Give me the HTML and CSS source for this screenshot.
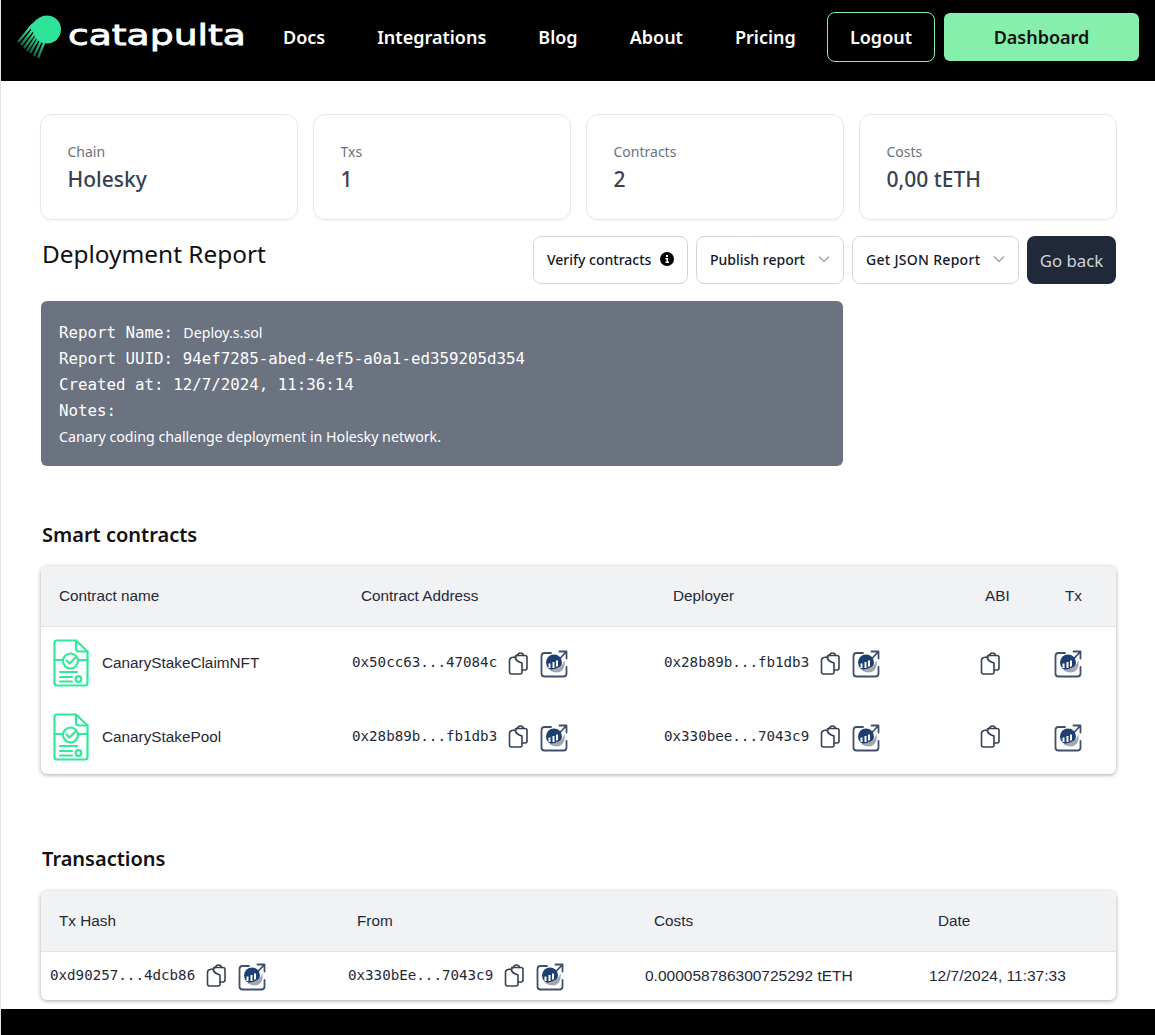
FILE: index.html
```html
<!DOCTYPE html>
<html lang="en">

<head>
  <meta charset="UTF-8" />
  <meta name="viewport" content="width=device-width, initial-scale=1.0" />
  <title>Deployment Report - Catapulta</title>
  <link rel="stylesheet" href="styles.css">
</head>

<body>

  <!-- shared icons -->
  <svg class="sprites" width="0" height="0" aria-hidden="true">
    <defs>
      <linearGradient id="tail" gradientUnits="userSpaceOnUse" x1="24" y1="18" x2="6" y2="42">
        <stop offset="0.150" stop-color="#2fe39a" />
        <stop offset="1" stop-color="#06281c" />
      </linearGradient>
    </defs>
    <symbol id="i-file" viewBox="0 0 36 48">
      <g fill="none" stroke="#2eea9a" stroke-width="2.200" stroke-linecap="round" stroke-linejoin="round">
        <path d="M23 1.500H4Q1.500 1.500 1.500 4V44Q1.500 46.500 4 46.500H32Q34.500 46.500 34.500 44V12.500Z" />
        <path d="M23 1.500V9.500Q23 12.500 26 12.500H34.500" />
        <circle cx="17.500" cy="22" r="7.500" />
        <path d="M13.500 21.500L16.500 24.500L22.500 18.500" />
        <path d="M1.500 21H10M25 21H34.500" />
        <path d="M7 33H24M7 38H19M7 42.500H19" />
        <circle cx="25.500" cy="40" r="2.800" />
      </g>
    </symbol>
    <symbol id="i-copy" viewBox="0 0 20 23">
      <g fill="none" stroke="#374151" stroke-width="1.600" stroke-linecap="round" stroke-linejoin="round">
        <path d="M1.500 8.500Q1.500 6 4 5.500L7 5Q8 9.500 14 11V20Q14 22 12 22H3.500Q1.500 22 1.500 20Z" />
        <path d="M8 5V3.500H9.500Q10 1 12.500 1Q15 1 15.500 3.500H17Q19 3.500 19 5.500V16Q19 18 17 18H14" />
        <path d="M8 3.500H15.500" />
      </g>
    </symbol>
    <symbol id="i-tx" viewBox="0 0 28 28">
      <path d="M11 3H4.500Q1.500 3 1.500 6V23.500Q1.500 26.500 4.500 26.500H23.500Q26.500 26.500 26.500 23.500V17" fill="none" stroke="#3f5068" stroke-width="1.800" stroke-linecap="round" />
      <path d="M20 8.500L26 2M19.500 1.500H26.500V8.500" fill="none" stroke="#3f5068" stroke-width="1.800" stroke-linecap="round" stroke-linejoin="round" />
      <circle cx="14" cy="12.500" r="8" fill="#1d3f72" />
      <path d="M8.500 18V13.500H10.500V18ZM12.500 18V12H14.500V18ZM16 17V10.500H18V16Z" fill="#fff" />
      <path d="M24.500 10Q22.500 18.500 9 20Q18 25 22.500 20Q25.500 16 24.500 10Z" fill="#a4a8ae" />
    </symbol>
  </svg>

  <header class="topbar">
    <a class="brand" href="#">
      <svg class="brand-mark" width="46" height="46" viewBox="0 0 46 46">
        <g stroke="url(#tail)" stroke-width="2.300" fill="none">
          <path d="M17 10L2 28" />
          <path d="M19 13L5 31" />
          <path d="M21 16L8 34" />
          <path d="M23 18L11 37" />
          <path d="M25 20L14 39" />
          <path d="M27 22L18 42" />
          <path d="M30 24L22 44" />
        </g>
        <path d="M21 5L13 13L28 29L41 26Z" fill="#2fe39a" />
        <circle cx="31" cy="15.500" r="14" fill="#2fe39a" />
      </svg>
      <span class="brand-name">catapulta</span>
    </a>
    <nav class="nav-links">
      <a href="#">Docs</a>
      <a href="#">Integrations</a>
      <a href="#">Blog</a>
      <a href="#">About</a>
      <a href="#">Pricing</a>
    </nav>
    <div class="nav-actions">
      <a class="btn-logout" href="#">Logout</a>
      <a class="btn-dashboard" href="#">Dashboard</a>
    </div>
  </header>

  <main class="content">

    <section class="stats">
      <div class="stat"><span class="stat-label">Chain</span><span class="stat-value">Holesky</span></div>
      <div class="stat"><span class="stat-label">Txs</span><span class="stat-value">1</span></div>
      <div class="stat"><span class="stat-label">Contracts</span><span class="stat-value">2</span></div>
      <div class="stat"><span class="stat-label">Costs</span><span class="stat-value">0,00 tETH</span></div>
    </section>

    <section class="report-head">
      <h1>Deployment Report</h1>
      <div class="report-actions">
        <button class="btn btn-verify">Verify contracts
          <svg width="14" height="14" viewBox="0 0 14 14">
            <circle cx="7" cy="7" r="7" fill="#000" />
            <path d="M6 3h2v2H6zM5.500 6H8v3.500h1V11H5.500V9.500h1V7.500h-1z" fill="#fff" />
          </svg>
        </button>
        <button class="btn btn-publish">Publish report
          <svg class="chevron" width="12" height="8" viewBox="0 0 12 8"><path d="M1 1.500L6 6.500L11 1.500" /></svg>
        </button>
        <button class="btn btn-json">Get JSON Report
          <svg class="chevron" width="12" height="8" viewBox="0 0 12 8"><path d="M1 1.500L6 6.500L11 1.500" /></svg>
        </button>
        <button class="btn-dark">Go back</button>
      </div>
    </section>

    <section class="report-box">
      <p><span class="mono">Report Name:</span> <span class="plain name-value">Deploy.s.sol</span></p>
      <p class="mono">Report UUID: 94ef7285-abed-4ef5-a0a1-ed359205d354</p>
      <p class="mono">Created at: 12/7/2024, 11:36:14</p>
      <p class="mono">Notes:</p>
      <p class="plain">Canary coding challenge deployment in Holesky network.</p>
    </section>

    <h2 class="section-title title-contracts">Smart contracts</h2>
    <div class="table-card">
      <table class="contracts">
        <colgroup>
          <col class="c-name"><col class="c-addr"><col class="c-addr"><col class="c-abi"><col class="c-tx">
        </colgroup>
        <thead>
          <tr><th>Contract name</th><th>Contract Address</th><th>Deployer</th><th>ABI</th><th>Tx</th></tr>
        </thead>
        <tbody>
          <tr>
            <td class="name-cell"><svg class="file-icon"><use href="#i-file" /></svg>CanaryStakeClaimNFT</td>
            <td><span class="addr">0x50cc63...47084c</span><svg class="copy"><use href="#i-copy" /></svg><svg class="tx"><use href="#i-tx" /></svg></td>
            <td><span class="addr">0x28b89b...fb1db3</span><svg class="copy"><use href="#i-copy" /></svg><svg class="tx"><use href="#i-tx" /></svg></td>
            <td class="icon-cell"><svg class="copy"><use href="#i-copy" /></svg></td>
            <td class="icon-cell"><svg class="tx"><use href="#i-tx" /></svg></td>
          </tr>
          <tr>
            <td class="name-cell"><svg class="file-icon"><use href="#i-file" /></svg>CanaryStakePool</td>
            <td><span class="addr">0x28b89b...fb1db3</span><svg class="copy"><use href="#i-copy" /></svg><svg class="tx"><use href="#i-tx" /></svg></td>
            <td><span class="addr">0x330bee...7043c9</span><svg class="copy"><use href="#i-copy" /></svg><svg class="tx"><use href="#i-tx" /></svg></td>
            <td class="icon-cell"><svg class="copy"><use href="#i-copy" /></svg></td>
            <td class="icon-cell"><svg class="tx"><use href="#i-tx" /></svg></td>
          </tr>
        </tbody>
      </table>
    </div>

    <h2 class="section-title title-txs">Transactions</h2>
    <div class="table-card">
      <table class="transactions">
        <colgroup>
          <col class="c-hash"><col class="c-from"><col class="c-costs"><col class="c-date">
        </colgroup>
        <thead>
          <tr><th>Tx Hash</th><th>From</th><th>Costs</th><th>Date</th></tr>
        </thead>
        <tbody>
          <tr>
            <td><span class="addr">0xd90257...4dcb86</span><svg class="copy"><use href="#i-copy" /></svg><svg class="tx"><use href="#i-tx" /></svg></td>
            <td><span class="addr">0x330bEe...7043c9</span><svg class="copy"><use href="#i-copy" /></svg><svg class="tx"><use href="#i-tx" /></svg></td>
            <td>0.000058786300725292 tETH</td>
            <td>12/7/2024, 11:37:33</td>
          </tr>
        </tbody>
      </table>
    </div>

  </main>

  <footer class="footer"></footer>

</body>

</html>
```

FILE: styles.css
```css
* {
  box-sizing: border-box;
}

body {
  margin: 0;
  background-color: #fff;
  font-family: "Noto Sans", sans-serif;
  color: #111827;
  border-left: 1px solid #e2e2e2;
}

a {
  text-decoration: none;
  color: inherit;
}

.sprites {
  position: absolute;
}

/* top bar */
.topbar {
  display: flex;
  align-items: center;
  height: 81px;
  padding: 0 16px 7px 15px;
  background-color: #000;
  color: #fff;
}

.brand {
  display: flex;
  align-items: center;
  width: 267px;
}

.brand-name {
  margin-left: 6px;
  margin-top: -4px;
  font-family: "DejaVu Sans", sans-serif;
  font-size: 29px;
  font-weight: 400;
  -webkit-text-stroke: 0.800px #fff;
  transform: scaleX(1.300);
  transform-origin: left center;
}

.nav-links {
  display: flex;
  gap: 52px;
  flex: 1;
  font-size: 18px;
  font-weight: 600;
}

.nav-actions {
  display: flex;
  align-items: center;
  gap: 9px;
  font-size: 18px;
  font-weight: 600;
}

.btn-logout {
  display: flex;
  align-items: center;
  justify-content: center;
  width: 108px;
  height: 50px;
  border: 1px solid #86efac;
  border-radius: 8px;
}

.btn-dashboard {
  display: flex;
  align-items: center;
  justify-content: center;
  width: 195px;
  height: 48px;
  border-radius: 6px;
  background-color: #86efac;
  color: #111;
}

/* main */
.content {
  padding: 33px 39px 9px 40px;
}

.stats {
  display: grid;
  grid-template-columns: repeat(4, 258px);
  gap: 15px;
  margin: 0 -1px;
}

.stat {
  display: flex;
  flex-direction: column;
  height: 106px;
  padding: 27px 26.500px;
  border: 1px solid #e5e7eb;
  border-radius: 12px;
  box-shadow: 0 1px 2px rgba(0, 0, 0, 0.05);
}

.stat-label {
  font-size: 14px;
  line-height: 20px;
  color: #6b7280;
}

.stat-value {
  font-size: 21px;
  line-height: 34px;
  font-weight: 500;
  color: #374151;
}

.report-head {
  display: flex;
  justify-content: space-between;
  align-items: flex-start;
  margin-top: 16px;
  padding-left: 1px;
}

h1 {
  margin: 0;
  font-size: 24.400px;
  line-height: 36px;
  font-weight: 400;
  color: #111;
}

.report-actions {
  display: flex;
  gap: 8px;
}

.btn {
  display: flex;
  align-items: center;
  justify-content: space-between;
  height: 48px;
  padding: 0 13px 2px;
  border: 1px solid #d1d5db;
  border-radius: 8px;
  background-color: #fff;
  font-family: inherit;
  font-size: 14px;
  font-weight: 500;
  color: #111827;
}

.btn-verify { width: 155px; }
.btn-publish { width: 148px; }
.btn-json { width: 167px; }

.btn-json {
  letter-spacing: 0.300px;
}

.chevron {
  fill: none;
  stroke: #9ca3af;
  stroke-width: 1.300;
}

.btn-dark {
  width: 89px;
  height: 48px;
  padding: 0;
  border: none;
  border-radius: 8px;
  background-color: #1f2937;
  font-family: inherit;
  font-size: 16.800px;
  color: #d1d5db;
}

.report-box {
  width: 802px;
  height: 165px;
  margin-top: 17px;
  padding: 18px 18px;
  border-radius: 6px;
  background-color: #6b7280;
  color: #fff;
}

.report-box p {
  margin: 0;
  line-height: 26px;
}

.mono {
  font-family: "DejaVu Sans Mono", monospace;
  font-size: 15.800px;
}

.plain {
  font-size: 14.200px;
}

.name-value {
  margin-left: 6px;
}

.section-title {
  margin: 0;
  padding-left: 1px;
  font-size: 20px;
  line-height: 28px;
  font-weight: 600;
  color: #111;
}

.title-contracts {
  margin-top: 55px;
}

.title-txs {
  margin-top: 71px;
}

/* tables */
.table-card {
  width: 1075px;
  margin-top: 17px;
  border-radius: 6px;
  box-shadow: 0 1px 4px rgba(0, 0, 0, 0.35);
  overflow: hidden;
}

.title-txs + .table-card {
  margin-top: 18px;
}

table {
  width: 100%;
  table-layout: fixed;
  border-collapse: collapse;
  font-family: "Liberation Sans", sans-serif;
  font-size: 15.500px;
  color: #1f2937;
}

th {
  height: 60px;
  padding: 0 0 0 18px;
  border-bottom: 1px solid #e2e4e8;
  background-color: #f1f2f4;
  font-weight: 400;
  font-size: 15.300px;
  text-align: left;
}

td {
  padding: 0 0 0 9px;
  white-space: nowrap;
}

.contracts td {
  height: 73.500px;
}

.transactions th {
  height: 61px;
}

.transactions td {
  height: 48px;
}

.c-name { width: 302px; }
.c-addr { width: 312px; }
.c-abi { width: 80px; }
.c-tx { width: 69px; }
.c-hash { width: 298px; }
.c-from { width: 297px; }
.c-costs { width: 284px; }
.c-date { width: 196px; }

.name-cell {
  display: flex;
  align-items: center;
  gap: 13px;
  padding-left: 12px;
  font-size: 15.300px;
}

.file-icon {
  width: 36px;
  height: 48px;
}

.icon-cell {
  padding-left: 7px;
}

.addr {
  font-family: "DejaVu Sans Mono", monospace;
  font-size: 14.200px;
}

.copy,
.tx {
  vertical-align: middle;
}

.copy {
  width: 20px;
  height: 23px;
  margin-left: 11px;
}

.tx {
  width: 28px;
  height: 28px;
  margin-top: 2px;
  margin-left: 12px;
}

.icon-cell .copy {
  margin-left: 6px;
}

.icon-cell .tx {
  margin-left: 0;
}

.footer {
  height: 26px;
  background-color: #000;
}
```
